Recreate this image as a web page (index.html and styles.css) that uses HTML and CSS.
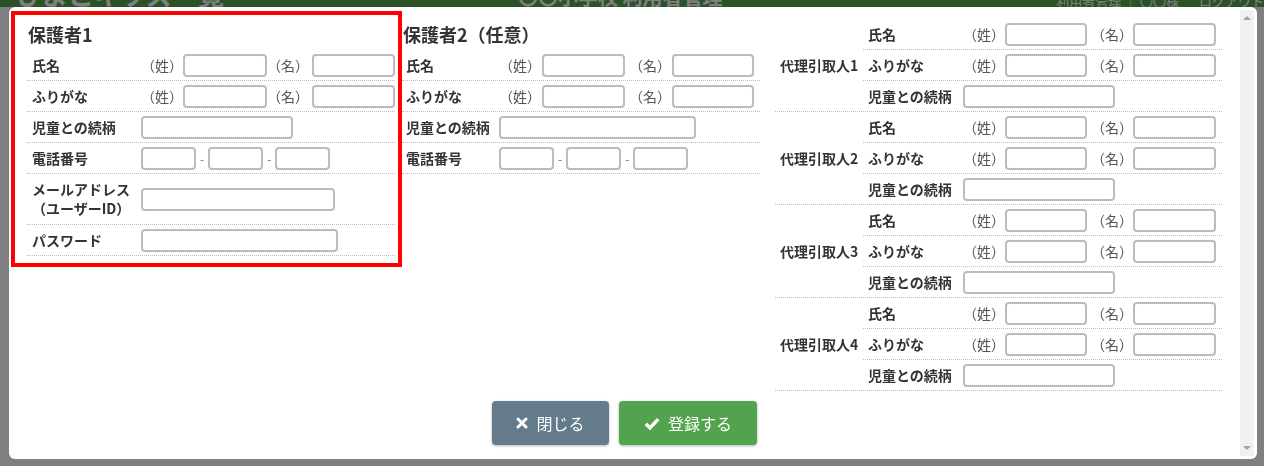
FILE: index.html
```html
<!DOCTYPE html>
<html lang="ja">
<head>
    <meta charset="UTF-8">
    <title>利用者登録</title>
    <link rel="stylesheet" href="styles.css">
</head>
<body>

<header class="topbar">
    <div class="brand">ひよこキッズ一覧</div>
    <div class="site-title">〇〇小学校 利用者管理</div>
    <div class="user-menu">
        <span>利用者管理 ｜ 〇〇様</span>
        <span>ログアウト</span>
    </div>
</header>

<div class="overlay"></div>

<div class="modal">
    <div class="modal-main">
        <div class="highlight"></div>

        <div class="modal-body">
            <section class="col col-g1">
                <h3 class="col-title">保護者1</h3>
                <div class="row">
                    <div class="label">氏名</div>
                    <span class="paren">（姓）</span><input type="text" class="in-name"><span class="paren paren-2">（名）</span><input type="text" class="in-name in-name-2">
                </div>
                <div class="row">
                    <div class="label">ふりがな</div>
                    <span class="paren">（姓）</span><input type="text" class="in-name"><span class="paren paren-2">（名）</span><input type="text" class="in-name in-name-2">
                </div>
                <div class="row">
                    <div class="label">児童との続柄</div>
                    <input type="text" class="in-rel">
                </div>
                <div class="row">
                    <div class="label">電話番号</div>
                    <input type="text" class="in-tel"><span class="dash">-</span><input type="text" class="in-tel"><span class="dash">-</span><input type="text" class="in-tel">
                </div>
                <div class="row row-tall">
                    <div class="label">メールアドレス<br>（ユーザーID）</div>
                    <input type="text" class="in-mail">
                </div>
                <div class="row">
                    <div class="label">パスワード</div>
                    <input type="password" class="in-pass">
                </div>
            </section>

            <section class="col col-g2">
                <h3 class="col-title">保護者2（任意）</h3>
                <div class="row">
                    <div class="label">氏名</div>
                    <span class="paren">（姓）</span><input type="text" class="in-name"><span class="paren paren-2">（名）</span><input type="text" class="in-name in-name-2">
                </div>
                <div class="row">
                    <div class="label">ふりがな</div>
                    <span class="paren">（姓）</span><input type="text" class="in-name"><span class="paren paren-2">（名）</span><input type="text" class="in-name in-name-2">
                </div>
                <div class="row">
                    <div class="label">児童との続柄</div>
                    <input type="text" class="in-rel">
                </div>
                <div class="row">
                    <div class="label">電話番号</div>
                    <input type="text" class="in-tel"><span class="dash">-</span><input type="text" class="in-tel"><span class="dash">-</span><input type="text" class="in-tel">
                </div>
            </section>

            <section class="col col-proxy">
                <div class="proxy">
                    <div class="proxy-name">代理引取人1</div>
                    <div class="proxy-rows">
                        <div class="row">
                            <div class="label">氏名</div>
                            <span class="paren">（姓）</span><input type="text" class="in-name"><span class="paren paren-2">（名）</span><input type="text" class="in-name in-name-2">
                        </div>
                        <div class="row">
                            <div class="label">ふりがな</div>
                            <span class="paren">（姓）</span><input type="text" class="in-name"><span class="paren paren-2">（名）</span><input type="text" class="in-name in-name-2">
                        </div>
                        <div class="row">
                            <div class="label">児童との続柄</div>
                            <input type="text" class="in-rel">
                        </div>
                    </div>
                </div>
                <div class="proxy">
                    <div class="proxy-name">代理引取人2</div>
                    <div class="proxy-rows">
                        <div class="row">
                            <div class="label">氏名</div>
                            <span class="paren">（姓）</span><input type="text" class="in-name"><span class="paren paren-2">（名）</span><input type="text" class="in-name in-name-2">
                        </div>
                        <div class="row">
                            <div class="label">ふりがな</div>
                            <span class="paren">（姓）</span><input type="text" class="in-name"><span class="paren paren-2">（名）</span><input type="text" class="in-name in-name-2">
                        </div>
                        <div class="row">
                            <div class="label">児童との続柄</div>
                            <input type="text" class="in-rel">
                        </div>
                    </div>
                </div>
                <div class="proxy">
                    <div class="proxy-name">代理引取人3</div>
                    <div class="proxy-rows">
                        <div class="row">
                            <div class="label">氏名</div>
                            <span class="paren">（姓）</span><input type="text" class="in-name"><span class="paren paren-2">（名）</span><input type="text" class="in-name in-name-2">
                        </div>
                        <div class="row">
                            <div class="label">ふりがな</div>
                            <span class="paren">（姓）</span><input type="text" class="in-name"><span class="paren paren-2">（名）</span><input type="text" class="in-name in-name-2">
                        </div>
                        <div class="row">
                            <div class="label">児童との続柄</div>
                            <input type="text" class="in-rel">
                        </div>
                    </div>
                </div>
                <div class="proxy">
                    <div class="proxy-name">代理引取人4</div>
                    <div class="proxy-rows">
                        <div class="row">
                            <div class="label">氏名</div>
                            <span class="paren">（姓）</span><input type="text" class="in-name"><span class="paren paren-2">（名）</span><input type="text" class="in-name in-name-2">
                        </div>
                        <div class="row">
                            <div class="label">ふりがな</div>
                            <span class="paren">（姓）</span><input type="text" class="in-name"><span class="paren paren-2">（名）</span><input type="text" class="in-name in-name-2">
                        </div>
                        <div class="row">
                            <div class="label">児童との続柄</div>
                            <input type="text" class="in-rel">
                        </div>
                    </div>
                </div>
            </section>
        </div>

        <div class="modal-footer">
            <button class="btn btn-close">
                <svg width="12" height="12" viewBox="0 0 12 12"><path d="M2 2 L10 10 M10 2 L2 10" stroke="#fff" stroke-width="3" stroke-linecap="round"/></svg>
                閉じる
            </button>
            <button class="btn btn-submit">
                <svg width="16" height="13" viewBox="0 0 16 13"><path d="M1.8 6.8 L6 11 L14.2 2.2" fill="none" stroke="#fff" stroke-width="3.4" stroke-linejoin="miter"/></svg>
                登録する
            </button>
        </div>
    </div>

    <div class="scrollbar">
        <span class="arrow arrow-up"></span>
        <span class="arrow arrow-down"></span>
    </div>
</div>

</body>
</html>
```

FILE: styles.css
```css
body {
    margin: 0;
    width: 1264px;
    height: 466px;
    overflow: hidden;
    background-color: #fff;
    color: #333;
    font-family: "Noto Sans CJK JP", "Noto Sans", sans-serif;
}

/* page behind the dialog */
.topbar {
    height: 7px;
    background-color: #56a44f;
    color: #fff;
    display: flex;
    align-items: flex-end;
    overflow: hidden;
    padding-left: 16px;
}

.brand {
    font-size: 26px;
    line-height: 1;
    font-weight: bold;
    width: 230px;
}

.site-title {
    font-size: 20px;
    line-height: 1;
    font-weight: bold;
    margin-left: 272px;
}

.user-menu {
    margin-left: auto;
    display: flex;
    gap: 20px;
    font-size: 13px;
    line-height: 1;
}

.overlay {
    position: fixed;
    top: 0;
    left: 0;
    right: 0;
    bottom: 0;
    background-color: rgba(0, 0, 0, 0.5);
}

/* dialog */
.modal {
    position: fixed;
    left: 9px;
    top: 7px;
    width: 1248px;
    height: 452px;
    background-color: #fff;
    border-radius: 6px;
    display: flex;
}

.modal-main {
    flex: 1;
    position: relative;
    padding: 12px 18px 0 18px;
}

.highlight {
    position: absolute;
    left: 2px;
    top: 4px;
    width: 391px;
    height: 256px;
    border: 4px solid #ff0000;
    box-sizing: border-box;
    pointer-events: none;
}

.modal-body {
    display: flex;
    align-items: flex-start;
}

.col-g1 {
    width: 368px;
}

.col-g2 {
    width: 358px;
    margin-left: 7px;
}

.col-proxy {
    width: 447px;
    margin-left: 15px;
}

.col-title {
    margin: 0;
    padding-left: 1px;
    font-size: 18px;
    line-height: 31px;
    font-weight: bold;
}

.row {
    display: flex;
    align-items: center;
    height: 30px;
    border-bottom: 1px dotted #bdbdbd;
}

.row-tall {
    height: 50px;
}

.label {
    flex: none;
    box-sizing: border-box;
    padding-left: 5px;
    font-size: 14px;
    line-height: 19px;
    font-weight: bold;
}

.col-g1 .label {
    width: 114px;
}

.col-g2 .label {
    width: 97px;
    padding-left: 4px;
}

.paren {
    flex: none;
    width: 42px;
    font-size: 14px;
    color: #555;
}

.dash {
    margin: 0 4px;
    font-size: 12px;
    color: #777;
}

input {
    box-sizing: border-box;
    height: 23px;
    padding: 2px 5px;
    border: 2px solid #bcbcbc;
    border-radius: 4px;
    background-color: #fff;
    font-family: inherit;
    font-size: 14px;
    outline: none;
}

.in-name {
    width: 84px;
}

.in-name-2 {
    width: 83px;
    margin-left: 3px;
}

.col-g2 .in-name {
    width: 83px;
    margin-left: 1px;
}

.col-g2 .in-name-2 {
    width: 82px;
}

.col-g2 .paren-2,
.col-proxy .paren-2 {
    margin-left: 4px;
}

.in-rel {
    width: 152px;
}

.col-g2 .in-rel {
    width: 197px;
}

.in-tel {
    width: 55px;
}

.in-mail {
    width: 194px;
}

.in-pass {
    width: 197px;
}

/* proxy pickup persons */
.proxy {
    display: flex;
    border-bottom: 1px dotted #bdbdbd;
}

.proxy-name {
    width: 88px;
    flex: none;
    box-sizing: border-box;
    padding-left: 5px;
    display: flex;
    align-items: center;
    font-size: 14px;
    font-weight: bold;
}

.proxy-rows {
    flex: 1;
}

.proxy-rows .row:last-child {
    border-bottom: none;
}

.col-proxy .label {
    width: 100px;
}

.col-proxy .in-name {
    width: 82px;
}

.col-proxy .in-name-2 {
    width: 83px;
    margin-left: 0;
}

/* footer buttons */
.modal-footer {
    display: flex;
    justify-content: center;
    gap: 10px;
    margin-top: 10px;
}

.btn {
    height: 44px;
    border: none;
    border-radius: 4px;
    color: #fff;
    font-family: inherit;
    font-size: 16px;
    display: inline-flex;
    align-items: center;
    justify-content: center;
    gap: 8px;
    box-shadow: 0 1px 3px rgba(0, 0, 0, 0.3);
    cursor: pointer;
}

.btn-close {
    width: 117px;
    background-color: #637b8a;
}

.btn-submit {
    width: 138px;
    background-color: #52a34d;
}

/* scrollbar */
.scrollbar {
    width: 17px;
    margin: 3px 3px 3px 0;
    padding: 6px 0;
    box-sizing: border-box;
    background-color: #f1f1f1;
    display: flex;
    flex-direction: column;
    justify-content: space-between;
    align-items: center;
}

.arrow {
    width: 0;
    height: 0;
    border-left: 4px solid transparent;
    border-right: 4px solid transparent;
}

.arrow-up {
    border-bottom: 4px solid #a3a3a3;
}

.arrow-down {
    border-top: 4px solid #a3a3a3;
}
```
